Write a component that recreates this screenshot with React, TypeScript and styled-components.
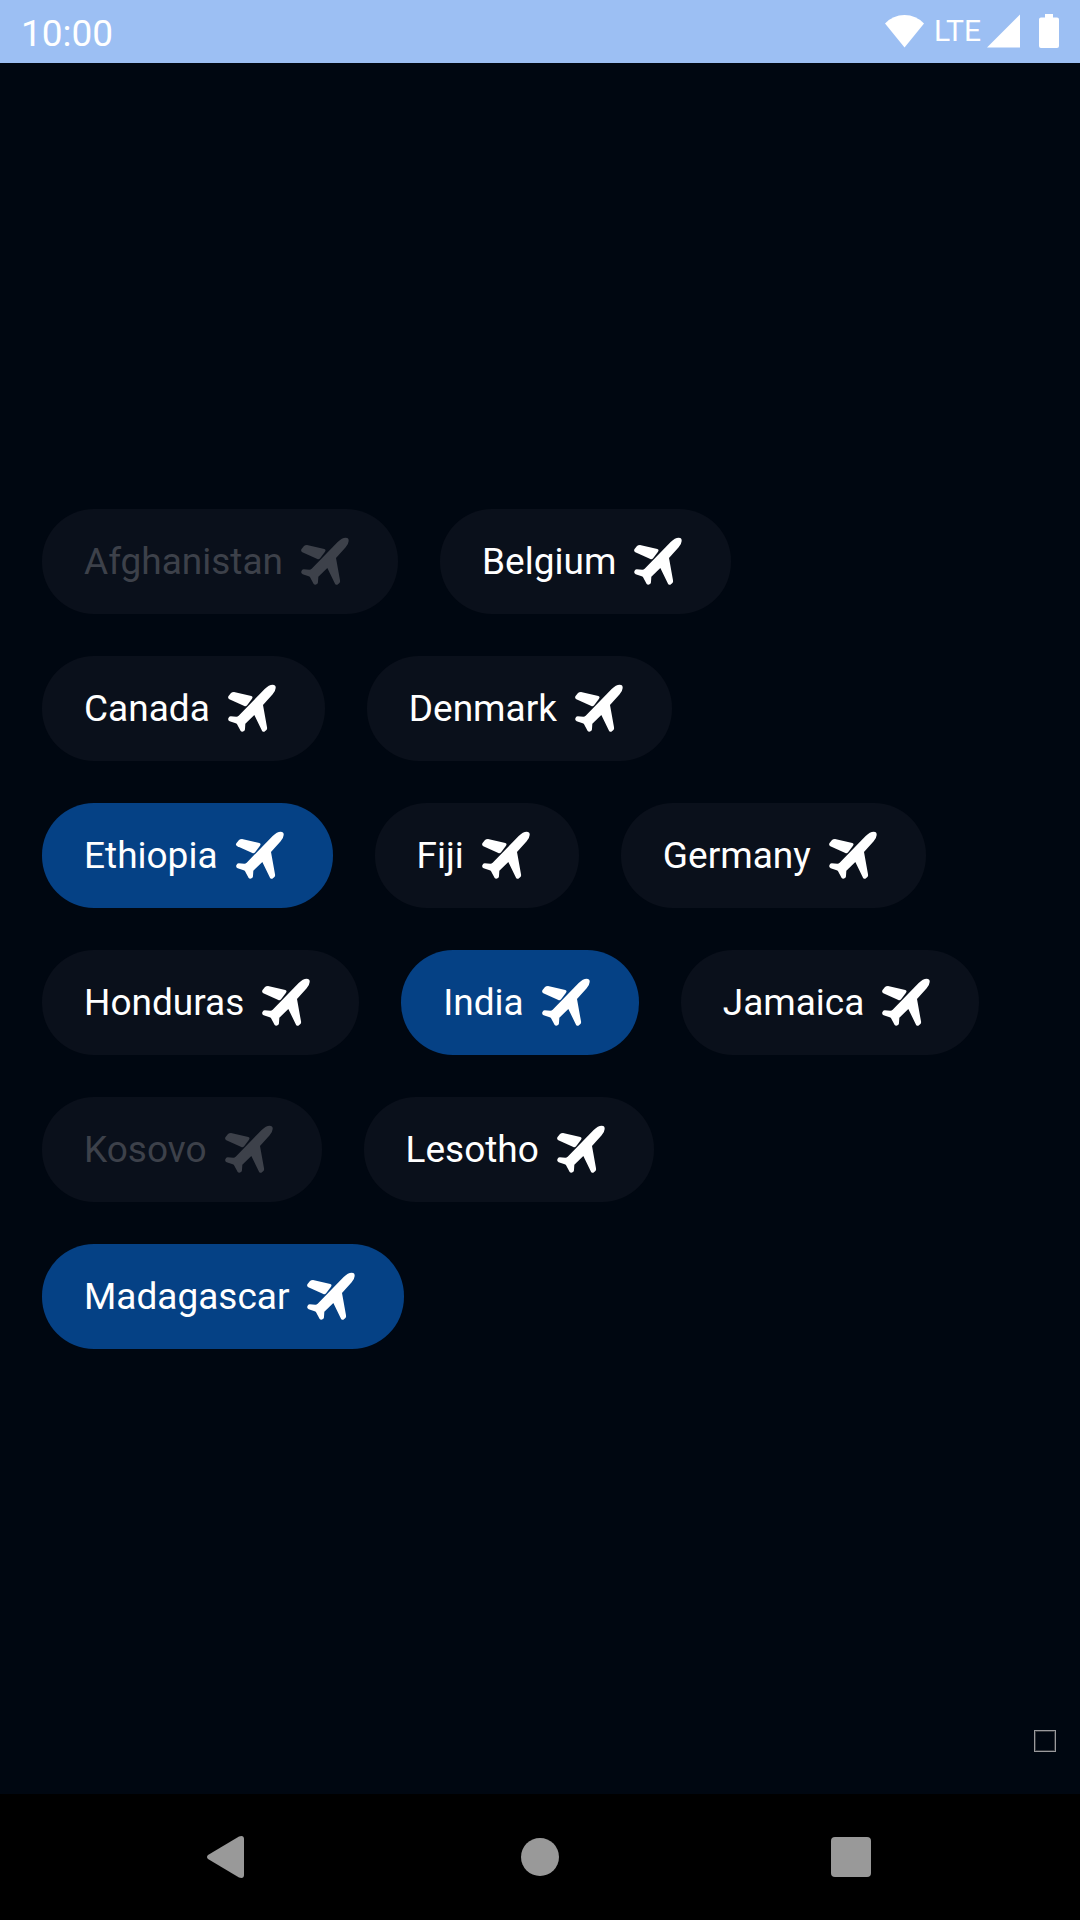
import React, { useState } from 'react';
import styled, { createGlobalStyle } from 'styled-components';

const GlobalStyle = createGlobalStyle`
  *, *::before, *::after { box-sizing: border-box; }
  body {
    margin: 0;
    background: #000711;
    color: #ffffff;
    font-family: Roboto, "Liberation Sans", sans-serif;
  }
`;

const Screen = styled.div`
  display: flex;
  flex-direction: column;
  min-height: 100vh;
`;

const StatusBar = styled.header`
  display: flex;
  align-items: center;
  justify-content: space-between;
  height: 63px;
  padding: 0 21px;
  background: #9cbff3;
`;

const Clock = styled.time`
  padding-top: 4px;
  font-size: 37px;
  line-height: 44px;
`;

const StatusIcons = styled.div`
  display: flex;
  align-items: center;
  padding-bottom: 2px;
`;

const StatusGlyph = styled.svg`
  display: block;
  fill: #ffffff;
`;

const Network = styled.span`
  padding: 0 6px 0 10px;
  font-size: 30px;
  line-height: 36px;
`;

const Main = styled.main`
  position: relative;
  display: flex;
  flex: 1;
  flex-direction: column;
  justify-content: center;
`;

const ChipList = styled.ul`
  display: flex;
  flex-wrap: wrap;
  gap: 42px;
  margin: 0;
  padding: 0 84px 0 42px;
  list-style: none;
`;

const Chip = styled.button<{ $selected: boolean }>`
  display: flex;
  align-items: center;
  gap: 10px;
  padding: 21px 42px;
  border: 0;
  border-radius: 52px;
  background: ${({ $selected }) => ($selected ? '#054185' : '#0a101b')};
  color: #ffffff;
  font: inherit;
  font-size: 37px;
  line-height: 44px;
  cursor: pointer;

  &:disabled {
    color: #3d414a;
    cursor: default;
  }
`;

const ChipLabel = styled.span`
  padding-top: 2px;
`;

const PlaneIcon = styled.svg`
  display: block;
  width: 63px;
  height: 63px;
  fill: currentColor;
`;

const CornerMark = styled.span`
  position: absolute;
  right: 24px;
  bottom: 42px;
  width: 22px;
  height: 22px;
  border: 1px solid #9a9a9d;
  box-shadow: inset 0 0 0 1px #33363c;
`;

const NavBar = styled.nav`
  display: flex;
  align-items: center;
  justify-content: center;
  gap: 185px;
  height: 126px;
  background: #000000;
`;

const NavButton = styled.button`
  display: grid;
  place-items: center;
  width: 126px;
  height: 126px;
  padding: 0;
  border: 0;
  background: none;
  color: #999999;
`;

const NavGlyph = styled.svg`
  display: block;
  width: 60px;
  height: 60px;
  fill: currentColor;
`;

const Plane = () => (
  <PlaneIcon viewBox="2 0 189 189" aria-hidden="true">
    <path d="M27 58L35 48Q38 45 44 45L96 57Q102 59 98 65L84 84Q80 89 75 87L30 67Q24 64 27 58Z" />
    <path d="M136 36Q149 23 160 23Q170 23 169 33Q168 44 160 52L131 84L143 151Q144 155 142 158L137 163Q132 167 128 161L105 114L78 140L77 156Q77 160 74 162Q68 167 64 162L54 143Q53 140 49 139L31 133Q25 130 27 124Q29 118 34 118L51 119Q55 119 58 116Z" />
  </PlaneIcon>
);

type Country = { name: string; selected?: boolean; disabled?: boolean };

const countries: Country[] = [
  { name: 'Afghanistan', disabled: true },
  { name: 'Belgium' },
  { name: 'Canada' },
  { name: 'Denmark' },
  { name: 'Ethiopia', selected: true },
  { name: 'Fiji' },
  { name: 'Germany' },
  { name: 'Honduras' },
  { name: 'India', selected: true },
  { name: 'Jamaica' },
  { name: 'Kosovo', disabled: true },
  { name: 'Lesotho' },
  { name: 'Madagascar', selected: true },
];

export default function App() {
  const [selected, setSelected] = useState<string[]>(
    countries.filter((c) => c.selected).map((c) => c.name),
  );

  const toggle = (name: string) =>
    setSelected((current) =>
      current.includes(name) ? current.filter((n) => n !== name) : [...current, name],
    );

  return (
    <Screen>
      <GlobalStyle />
      <StatusBar>
        <Clock>10:00</Clock>
        <StatusIcons>
          <StatusGlyph width="39" height="34" viewBox="0 0 39 34" aria-hidden="true">
            <path d="M0 9.500Q8 1 19.500 1T39 9.500L19.500 33.500Z" />
          </StatusGlyph>
          <Network>LTE</Network>
          <StatusGlyph width="33" height="34" viewBox="0 0 33 34" aria-hidden="true">
            <path d="M0 33.500L33 0.500V33.500Z" />
          </StatusGlyph>
          <StatusGlyph width="39" height="34" viewBox="0 0 39 34" aria-hidden="true">
            <path d="M25 0H33V3.500H37Q39 3.500 39 5.500V32Q39 34 37 34H21Q19 34 19 32V5.500Q19 3.500 21 3.500H25Z" />
          </StatusGlyph>
        </StatusIcons>
      </StatusBar>
      <Main>
        <ChipList>
          {countries.map(({ name, disabled }) => (
            <li key={name}>
              <Chip
                type="button"
                disabled={disabled}
                $selected={selected.includes(name)}
                aria-pressed={selected.includes(name)}
                onClick={() => toggle(name)}
              >
                <ChipLabel>{name}</ChipLabel>
                <Plane />
              </Chip>
            </li>
          ))}
        </ChipList>
        <CornerMark />
      </Main>
      <NavBar>
        <NavButton type="button" aria-label="Back">
          <NavGlyph viewBox="0 0 60 60" aria-hidden="true">
            <path d="M9 28L40 9.500Q45 8 45 12V48Q45 52 40 50.500L9 32Q7 30 9 28Z" />
          </NavGlyph>
        </NavButton>
        <NavButton type="button" aria-label="Home">
          <NavGlyph viewBox="0 0 60 60" aria-hidden="true">
            <circle cx="30" cy="30" r="19" />
          </NavGlyph>
        </NavButton>
        <NavButton type="button" aria-label="Recent apps">
          <NavGlyph viewBox="0 0 60 60" aria-hidden="true">
            <rect x="10" y="10" width="40" height="40" rx="4" />
          </NavGlyph>
        </NavButton>
      </NavBar>
    </Screen>
  );
}
